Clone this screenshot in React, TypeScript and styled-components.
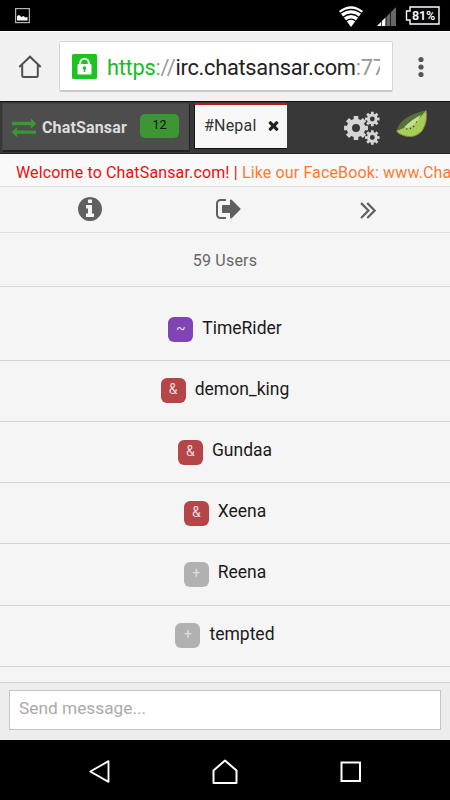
import React from 'react';
import styled, { createGlobalStyle } from 'styled-components';

const GlobalStyle = createGlobalStyle`
  * { box-sizing: border-box; }
  body { margin: 0; background: #f5f5f5; font-family: Roboto, "Noto Sans", sans-serif; }
  svg { display: block; flex: none; }
`;

const Screen = styled.div`
  width: 450px;
  height: 800px;
  overflow: hidden;
  display: flex;
  flex-direction: column;
  background: #f5f5f5;
`;

const StatusBar = styled.header`
  height: 31px;
  flex: none;
  background: #000;
  display: flex;
  align-items: flex-start;
  padding: 6px 10px 0 15px;
`;

const StatusIcons = styled.div`
  margin-left: auto;
  display: flex;
`;

const Signal = styled.svg`
  margin-left: 12px;
`;

const Battery = styled.div`
  width: 35px;
  height: 19px;
  margin-left: 9px;
  display: grid;
  > * { grid-area: 1 / 1; }
`;

const BatteryText = styled.span`
  color: #fff;
  font-size: 12.5px;
  font-weight: 600;
  line-height: 19px;
  padding-left: 7px;
  letter-spacing: -0.2px;
`;

const BrowserBar = styled.div`
  height: 70px;
  flex: none;
  background: #f1f1f1;
  border-top: 1px solid #fff;
  display: flex;
  align-items: center;
  padding: 0 0 0 18px;
`;

const AddressBox = styled.div`
  width: 334px;
  height: 51px;
  margin: 0 22px 0 17px;
  padding: 0 12px;
  background: #fff;
  border: 1px solid #d6d6d6;
  border-bottom: 2px solid #cbcbcb;
  border-radius: 2px;
  display: flex;
  align-items: center;
`;

const Address = styled.div`
  flex: 1;
  margin: 3px 0 0 10px;
  overflow: hidden;
  white-space: nowrap;
  font-size: 21.8px;
  letter-spacing: -0.27px;
  line-height: 30px;
  color: #222;
`;

const Scheme = styled.span`
  color: #16bd1e;
`;
const Faint = styled.span`
  color: #999;
`;

const TabBar = styled.nav`
  height: 53px;
  flex: none;
  background: #383838;
  border-top: 1px solid #111;
  border-bottom: 1px solid #242424;
  display: flex;
  align-items: flex-start;
  padding: 1px 0 0 2px;
`;

const ServerTab = styled.div`
  width: 188px;
  height: 49px;
  background: #4d4d4d;
  border: 1px solid #444;
  border-right: 1px solid #222;
  border-bottom: 2px solid #222;
  display: flex;
  align-items: center;
  padding-left: 9px;
  color: #ddd;
  font-size: 16px;
  font-weight: 700;
  letter-spacing: 0.15px;
`;

const ServerName = styled.span`
  margin-left: 6px;
`;

const CountBadge = styled.span`
  width: 39px;
  height: 24px;
  margin: -3px 0 0 13px;
  border-radius: 5px;
  background: #3c9632;
  color: #111;
  font-size: 12.5px;
  font-weight: 400;
  line-height: 22px;
  letter-spacing: 0;
  text-align: center;
`;

const ChannelTab = styled.div`
  width: 93px;
  height: 46px;
  margin-left: 4px;
  background: #f8f8f8;
  border-top: 2px solid #c4171b;
  border-left: 1px solid #111;
  border-bottom: 1px solid #111;
  display: flex;
  align-items: center;
  padding: 0 6px 2px 9px;
  justify-content: space-between;
  color: #333;
  font-size: 16px;
  letter-spacing: 0.2px;
`;

const Ticker = styled.div`
  height: 32px;
  flex: none;
  background: #f9f9f9;
  padding-left: 16px;
  overflow: hidden;
  white-space: nowrap;
  color: #f00c12;
  font-size: 16px;
  line-height: 37px;
  letter-spacing: 0.14px;
`;

const TickerLink = styled.span`
  color: #ff7a33;
`;

const ActionRow = styled.div`
  height: 47px;
  flex: none;
  border-top: 1px solid #dedede;
  border-bottom: 1px solid #dedede;
  display: grid;
  grid-template-columns: 180px 97px 182px;
  align-items: center;
  justify-items: center;
  padding-bottom: 1px;
`;

const UserCount = styled.div`
  height: 54px;
  flex: none;
  border-bottom: 1px solid #d8d8d8;
  color: #666;
  font-size: 16px;
  letter-spacing: 0.2px;
  line-height: 55px;
  text-align: center;
`;

const UserList = styled.ul`
  margin: 0;
  padding: 12.6px 0 0;
  flex: 1;
  min-height: 0;
  list-style: none;
`;

const UserRow = styled.li`
  height: 61.2px;
  border-bottom: 1px solid #d3d3d3;
  display: flex;
  justify-content: center;
  align-items: center;
  gap: 9px;
`;

const ModeBadge = styled.span<{ $color: string }>`
  width: 25px;
  height: 25px;
  border-radius: 6px;
  background: ${(p) => p.$color};
  color: #e6dcdc;
  font-size: 14px;
  line-height: 23px;
  text-align: center;
`;

const UserName = styled.span`
  color: #1b1b1b;
  font-size: 17.5px;
  line-height: 24px;
  margin-top: -4px;
`;

const Composer = styled.form`
  height: 58px;
  flex: none;
  background: #ededed;
  border-top: 1px solid #cfcfcf;
  padding: 7px 9px 9px;
`;

const MessageInput = styled.input`
  display: block;
  width: 432px;
  height: 40px;
  border: 1px solid #c5c5c5;
  border-radius: 0;
  background: #fff;
  padding: 0 9px 4px;
  font-family: Roboto, sans-serif;
  font-size: 17.3px;
  outline: none;
  &::placeholder { color: #aaa; opacity: 1; }
`;

const SystemNav = styled.footer`
  height: 60px;
  flex: none;
  background: #000;
  display: flex;
  justify-content: space-between;
  align-items: center;
  padding: 4px 87px 0;
`;

const Gears = styled.svg`
  margin: 6px 0 0 56px;
`;

const Kiwi = styled.svg`
  margin: 4px 0 0 14px;
`;

const glyphs = {
  exchange:
    'M1792 1184v192q0 13-9.5 22.5t-22.5 9.5h-1376v192q0 13-9.5 22.5t-22.5 9.5q-12 0-24-10l-319-320q-9-9-9-22 0-14 9-23l320-320q9-9 23-9 13 0 22.5 9.5t9.5 22.5v192h1376q13 0 22.5 9.5t9.5 22.5zm0-544q0 14-9 23l-320 320q-9 9-23 9-13 0-22.5-9.5t-9.5-22.5v-192h-1376q-13 0-22.5-9.5t-9.5-22.5v-192q0-13 9.5-22.5t22.5-9.5h1376v-192q0-14 9-23t23-9q12 0 24 10l319 319q9 9 9 23z',
  close:
    'M1490 1322q0 40-28 68l-136 136q-28 28-68 28t-68-28l-294-294-294 294q-28 28-68 28t-68-28l-136-136q-28-28-28-68t28-68l294-294-294-294q-28-28-28-68t28-68l136-136q28-28 68-28t68 28l294 294 294-294q28-28 68-28t68 28l136 136q28 28 28 68t-28 68l-294 294 294 294q28 28 28 68z',
  info:
    'M1152 1376v-160q0-14-9-23t-23-9h-96v-512q0-14-9-23t-23-9h-320q-14 0-23 9t-9 23v160q0 14 9 23t23 9h96v320h-96q-14 0-23 9t-9 23v160q0 14 9 23t23 9h448q14 0 23-9t9-23zm-128-896v-160q0-14-9-23t-23-9h-192q-14 0-23 9t-9 23v160q0 14 9 23t23 9h192q14 0 23-9t9-23zm640 416q0 209-103 385.5t-279.5 279.5-385.5 103-385.5-103-279.5-279.5-103-385.5 103-385.5 279.5-279.5 385.5-103 385.5 103 279.5 279.5 103 385.5z',
  leave:
    'M704 1440q0 4 1 20t.5 26.5-3 23.5-10 19.5-20.5 6.5h-320q-119 0-203.5-84.5t-84.5-203.5v-704q0-119 84.5-203.5t203.5-84.5h320q13 0 22.5 9.5t9.5 22.5q0 4 1 20t.5 26.5-3 23.5-10 19.5-20.5 6.5h-320q-66 0-113 47t-47 113v704q0 66 47 113t113 47h312l11.5 1 11.5 3 8 5.5 7 9 2 13.5zm928-544q0 26-19 45l-544 544q-19 19-45 19t-45-19-19-45v-288h-448q-26 0-45-19t-19-45v-384q0-26 19-45t45-19h448v-288q0-26 19-45t45-19 45 19l544 544q19 19 19 45z',
  forward:
    'M979 960q0 13-10 23l-466 466q-10 10-23 10t-23-10l-50-50q-10-10-10-23t10-23l393-393-393-393q-10-10-10-23t10-23l50-50q10-10 23-10t23 10l466 466q10 10 10 23zm384 0q0 13-10 23l-466 466q-10 10-23 10t-23-10l-50-50q-10-10-10-23t10-23l393-393-393-393q-10-10-10-23t10-23l50-50q10-10 23-10t23 10l466 466q10 10 10 23z',
};

function Glyph({ name, size, color }: { name: keyof typeof glyphs; size: number; color: string }) {
  return (
    <svg width={size} height={size} viewBox="0 0 1792 1792" fill={color}>
      <path d={glyphs[name]} />
    </svg>
  );
}

// Outline of an eight-toothed gear with a round hole.
function gearPath(cx: number, cy: number, outer: number, root: number, hole: number) {
  const points: string[] = [];
  for (let i = 0; i < 8; i++) {
    const mid = (i * Math.PI) / 4;
    const corners = [[-0.25, root], [-0.19, outer], [0.19, outer], [0.25, root]];
    corners.forEach(([offset, r]) => {
      points.push(`${(cx + r * Math.cos(mid + offset)).toFixed(2)} ${(cy + r * Math.sin(mid + offset)).toFixed(2)}`);
    });
  }
  return `M${points.join('L')}ZM${cx - hole} ${cy}a${hole} ${hole} 0 1 0 ${hole * 2} 0a${hole} ${hole} 0 1 0 ${-hole * 2} 0Z`;
}

const PURPLE = '#8044b4';
const RED = '#b54548';
const GREY = '#b1b1b1';

const users = [
  { mode: '~', name: 'TimeRider', color: PURPLE },
  { mode: '&', name: 'demon_king', color: RED },
  { mode: '&', name: 'Gundaa', color: RED },
  { mode: '&', name: 'Xeena', color: RED },
  { mode: '+', name: 'Reena', color: GREY },
  { mode: '+', name: 'tempted', color: GREY },
];

export default function App() {
  return (
    <Screen>
      <GlobalStyle />
      <StatusBar>
        <svg width="15" height="18" viewBox="0 0 15 18">
          <rect x=".6" y="2.6" width="13.8" height="14" fill="#000" stroke="#b5b5b5" strokeWidth="1.2" />
          <path d="M2 14.500V10l2-1 2.500 2 2-1 2 1.500 2-.5v3.500z" fill="#fff" />
        </svg>
        <StatusIcons>
          <svg width="26" height="22" viewBox="0 0 26 22">
            <path d="M1 5Q13-4.500 25 5L13 21z" fill="#fff" />
            <path d="M2 7.600Q13-.6 24 7.600M4.800 11.500Q13 5 21.200 11.500M7.800 15.400Q13 11 18.200 15.400" fill="none" stroke="#000" strokeWidth="1.300" />
          </svg>
          <Signal width="20" height="22" viewBox="0 0 20 22">
            <path d="M1 20L20 1v19z" fill="#666" />
            <path d="M1 20L9.500 11.500V20z" fill="#fff" />
            <path d="M5.500 14v6M10 8v12M14.500 3v17" stroke="#111" strokeWidth=".8" />
          </Signal>
          <Battery>
            <svg width="35" height="19" viewBox="0 0 35 19">
              <path d="M5 1h29v17H5v-4H1.500V5H5z" fill="none" stroke="#fff" strokeWidth="1.400" />
            </svg>
            <BatteryText>81%</BatteryText>
          </Battery>
        </StatusIcons>
      </StatusBar>

      <BrowserBar>
        <svg width="24" height="24" viewBox="0 0 24 24" fill="none" stroke="#505050" strokeWidth="2">
          <path d="M1.300 12L12 1.700 22.700 12M4.200 10v10.500q0 1.500 1.500 1.500h12.600q1.500 0 1.500-1.500V10" />
        </svg>
        <AddressBox>
          <svg width="25" height="25" viewBox="0 0 25 25">
            <rect width="25" height="25" rx="1.500" fill="#1bc421" />
            <path d="M8.200 11V9a4.300 4.300 0 0 1 8.600 0v2" fill="none" stroke="#fff" strokeWidth="2" />
            <rect x="5.500" y="10" width="14" height="10.500" rx="1" fill="#fff" />
            <circle cx="12.500" cy="14" r="1.800" fill="#1bc421" />
            <path d="M12.500 14v4" stroke="#1bc421" strokeWidth="1.500" />
          </svg>
          <Address>
            <Scheme>https</Scheme><Faint>://</Faint>irc.chatsansar.com<Faint>:77</Faint>
          </Address>
        </AddressBox>
        <svg width="12" height="22" viewBox="0 0 12 22" fill="#555">
          <circle cx="6" cy="3.500" r="2.600" />
          <circle cx="6" cy="11" r="2.600" />
          <circle cx="6" cy="18.500" r="2.600" />
        </svg>
      </BrowserBar>

      <TabBar>
        <ServerTab>
          <Glyph name="exchange" size={24} color="#3c9632" />
          <ServerName>ChatSansar</ServerName>
          <CountBadge>12</CountBadge>
        </ServerTab>
        <ChannelTab>
          #Nepal
          <Glyph name="close" size={15} color="#222" />
        </ChannelTab>
        <Gears width="38" height="36" viewBox="0 0 38 36" fill="#d5d5d5" fillRule="evenodd">
          <path d={gearPath(13, 19, 12.2, 9.3, 4)} />
          <path d={gearPath(29.3, 10, 7.4, 5.4, 2.4)} />
          <path d={gearPath(29.3, 28.5, 7.4, 5.4, 2.4)} />
        </Gears>
        <Kiwi width="34" height="32" viewBox="0 0 34 32">
          <path d="M1.500 24Q7 13 31 3.500 33 15 27 24 20 31.500 10 29 3 27 1.500 24z" fill="#a5ce59" />
          <path d="M1.500 24Q5 9 31 3.500Q22 17 1.500 24z" fill="#57713a" />
          <path d="M9 20.500Q17 12 26 8Q22 17 13 21z" fill="#c6df91" />
          <path d="M31 3.500Q33 15 27 24 20 31.500 10 29 3 27 1.500 24" fill="none" stroke="#9c7b42" strokeWidth=".9" />
          <path d="M11 22h1.500M15 22l1-1M18 20l1-1M21 15.500l.8-1" stroke="#364b25" strokeWidth="1.200" />
        </Kiwi>
      </TabBar>

      <Ticker>
        Welcome to ChatSansar.com! | <TickerLink>Like our FaceBook: www.ChatSansar.com</TickerLink>
      </Ticker>

      <ActionRow>
        <Glyph name="info" size={28} color="#606060" />
        <Glyph name="leave" size={28} color="#606060" />
        <Glyph name="forward" size={29} color="#606060" />
      </ActionRow>

      <UserCount>59 Users</UserCount>
      <UserList>
        {users.map((user) => (
          <UserRow key={user.name}>
            <ModeBadge $color={user.color}>{user.mode}</ModeBadge>
            <UserName>{user.name}</UserName>
          </UserRow>
        ))}
      </UserList>

      <Composer>
        <MessageInput placeholder="Send message..." />
      </Composer>

      <SystemNav>
        <svg width="25" height="26" viewBox="0 0 25 26" fill="none" stroke="#fff" strokeWidth="1.900">
          <path d="M21.500 2.200v20.600L3.300 12.500z" strokeLinejoin="round" />
        </svg>
        <svg width="26" height="26" viewBox="0 0 26 26" fill="none" stroke="#fff" strokeWidth="2">
          <path d="M1.500 11.500L13 1.500l11.500 10v12.500h-23z" strokeLinejoin="round" />
        </svg>
        <svg width="25" height="26" viewBox="0 0 25 26" fill="none" stroke="#fff" strokeWidth="2">
          <rect x="3.500" y="3.500" width="18.500" height="18.500" />
        </svg>
      </SystemNav>
    </Screen>
  );
}
